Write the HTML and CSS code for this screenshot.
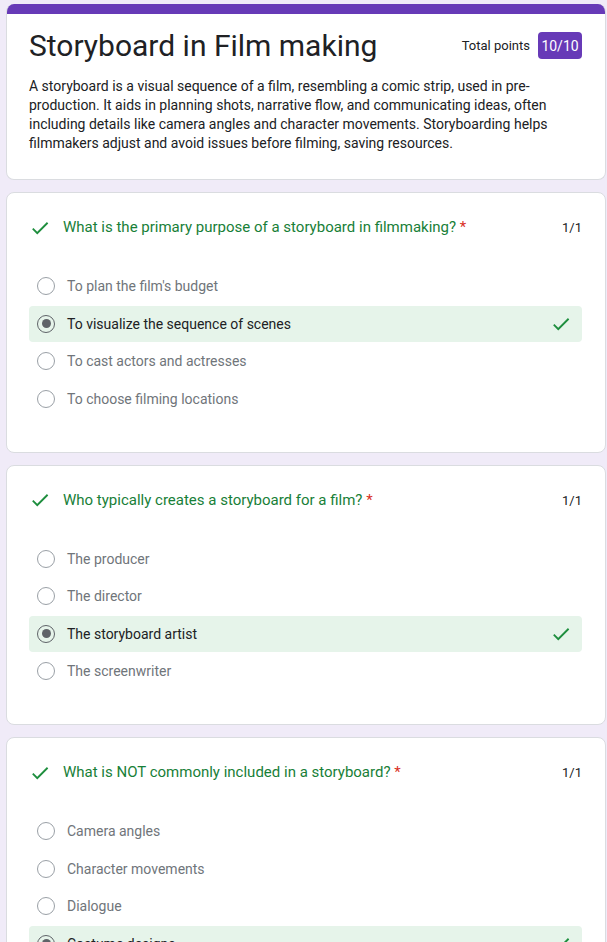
FILE: index.html
```html
<!DOCTYPE html>
<html lang="en">
<head>
<meta charset="utf-8">
<title>Storyboard in Film making</title>
<link rel="stylesheet" href="styles.css">
</head>
<body>
<main class="page">
  <section class="card header-card">
    <div class="band"></div>
    <div class="header-body">
      <div class="title-row">
        <h1 class="title">Storyboard in Film making</h1>
        <div class="score"><span class="score-label">Total points</span><span class="badge">10/10</span></div>
      </div>
      <p class="desc">A storyboard is a visual sequence of a film, resembling a comic strip, used in pre-production. It aids in planning shots, narrative flow, and communicating ideas, often including details like camera angles and character movements. Storyboarding helps filmmakers adjust and avoid issues before filming, saving resources.</p>
    </div>
  </section>

  <section class="card q-card">
    <div class="q-head">
      <svg class="q-check" viewBox="0 0 24 24" width="22" height="22"><path d="M9 16.17L4.83 12l-1.42 1.41L9 19 21 7l-1.41-1.41z"/></svg>
      <div class="q-text">What is the primary purpose of a storyboard in filmmaking? <span class="req">*</span></div>
      <div class="q-points">1/1</div>
    </div>
    <ul class="options">
      <li class="opt"><span class="radio"></span><span class="opt-text">To plan the film's budget</span></li>
      <li class="opt correct"><span class="radio on"></span><span class="opt-text">To visualize the sequence of scenes</span><svg class="opt-check" viewBox="0 0 24 24" width="22" height="22"><path d="M9 16.17L4.83 12l-1.42 1.41L9 19 21 7l-1.41-1.41z"/></svg></li>
      <li class="opt"><span class="radio"></span><span class="opt-text">To cast actors and actresses</span></li>
      <li class="opt"><span class="radio"></span><span class="opt-text">To choose filming locations</span></li>
    </ul>
  </section>

  <section class="card q-card">
    <div class="q-head">
      <svg class="q-check" viewBox="0 0 24 24" width="22" height="22"><path d="M9 16.17L4.83 12l-1.42 1.41L9 19 21 7l-1.41-1.41z"/></svg>
      <div class="q-text">Who typically creates a storyboard for a film? <span class="req">*</span></div>
      <div class="q-points">1/1</div>
    </div>
    <ul class="options">
      <li class="opt"><span class="radio"></span><span class="opt-text">The producer</span></li>
      <li class="opt"><span class="radio"></span><span class="opt-text">The director</span></li>
      <li class="opt correct"><span class="radio on"></span><span class="opt-text">The storyboard artist</span><svg class="opt-check" viewBox="0 0 24 24" width="22" height="22"><path d="M9 16.17L4.83 12l-1.42 1.41L9 19 21 7l-1.41-1.41z"/></svg></li>
      <li class="opt"><span class="radio"></span><span class="opt-text">The screenwriter</span></li>
    </ul>
  </section>

  <section class="card q-card">
    <div class="q-head">
      <svg class="q-check" viewBox="0 0 24 24" width="22" height="22"><path d="M9 16.17L4.83 12l-1.42 1.41L9 19 21 7l-1.41-1.41z"/></svg>
      <div class="q-text">What is NOT commonly included in a storyboard? <span class="req">*</span></div>
      <div class="q-points">1/1</div>
    </div>
    <ul class="options">
      <li class="opt"><span class="radio"></span><span class="opt-text">Camera angles</span></li>
      <li class="opt"><span class="radio"></span><span class="opt-text">Character movements</span></li>
      <li class="opt"><span class="radio"></span><span class="opt-text">Dialogue</span></li>
      <li class="opt correct"><span class="radio on"></span><span class="opt-text">Costume designs</span><svg class="opt-check" viewBox="0 0 24 24" width="22" height="22"><path d="M9 16.17L4.83 12l-1.42 1.41L9 19 21 7l-1.41-1.41z"/></svg></li>
    </ul>
  </section>
</main>
</body>
</html>
```

FILE: styles.css
```css
* { box-sizing: border-box; }

html, body {
  margin: 0;
  padding: 0;
}

body {
  background: #f0ebf8;
  font-family: Roboto, "Liberation Sans", Arial, sans-serif;
  color: #202124;
}

.page {
  width: 600px;
  margin-left: 6px;
  padding-top: 4px;
  display: flex;
  flex-direction: column;
  gap: 12px;
}

.card {
  background: #fff;
  border: 1px solid #dadce0;
  border-radius: 8px;
}

.header-card {
  border-top: none;
  overflow: hidden;
}

.band {
  height: 10px;
  background: #673ab7;
}

.header-body {
  padding: 14px 23px 26px 22px;
}

.title-row {
  display: flex;
  align-items: flex-start;
  justify-content: space-between;
}

.title {
  margin: 0;
  font-size: 30px;
  font-weight: 400;
  line-height: 36px;
  color: #202124;
}

.score {
  display: flex;
  align-items: center;
  gap: 8px;
  margin-top: 4px;
}

.score-label {
  font-size: 13px;
  color: #202124;
}

.badge {
  background: #673ab7;
  color: #fff;
  font-size: 14px;
  border-radius: 4px;
  height: 27px;
  width: 44px;
  display: flex;
  align-items: center;
  justify-content: center;
}

.desc {
  margin: 13px 0 0;
  font-size: 14px;
  line-height: 19px;
  color: #202124;
}

.q-card {
  padding: 23px 23px 35px 22px;
}

.q-head {
  display: flex;
  align-items: center;
  height: 23px;
}

.q-check {
  fill: #1e8e3e;
  flex: none;
  margin-left: 0;
  margin-right: 12px;
}

.q-text {
  flex: 1;
  font-size: 15px;
  line-height: 22.5px;
  color: #188038;
}

.req {
  color: #d93025;
}

.q-points {
  font-size: 13px;
  color: #202124;
}

.options {
  list-style: none;
  margin: 29px 0 0;
  padding: 0;
  display: flex;
  flex-direction: column;
  gap: 1.5px;
}

.opt {
  display: flex;
  align-items: center;
  height: 36px;
  padding: 0 10px 0 8px;
  border-radius: 4px;
}

.opt.correct {
  background: #e6f4ea;
}

.radio {
  flex: none;
  width: 18px;
  height: 18px;
  border: 1.5px solid #9aa0a6;
  border-radius: 50%;
  margin-right: 12px;
  display: flex;
  align-items: center;
  justify-content: center;
}

.radio.on {
  border-color: #5f6368;
}

.radio.on::after {
  content: "";
  width: 9px;
  height: 9px;
  border-radius: 50%;
  background: #5f6368;
}

.opt-text {
  flex: 1;
  font-size: 14px;
  color: #70757a;
}

.opt.correct .opt-text {
  color: #202124;
}

.opt-check {
  flex: none;
  fill: #1e8e3e;
}
```
